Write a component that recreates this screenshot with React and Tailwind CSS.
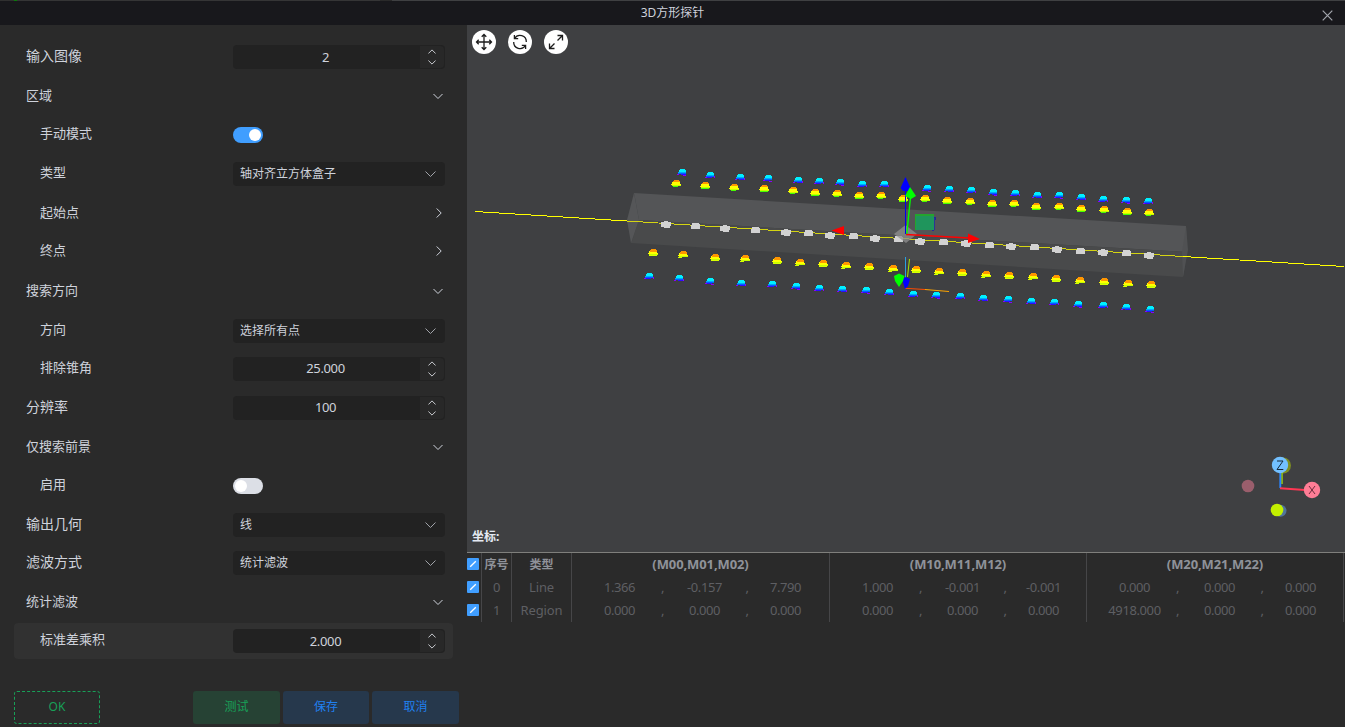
import React from 'react';

const CYAN_TOP = [
  [682, 172], [710, 175], [740, 177], [768, 178], [798, 180], [819, 181], [840, 182], [862, 184], [884, 184],
  [927, 188], [949, 189], [971, 190], [993, 192], [1015, 193], [1037, 195], [1059, 195], [1081, 197], [1103, 199],
  [1126, 200], [1148, 201],
];
const YELLOW_TOP = [
  [676, 183], [705, 185], [734, 187], [764, 188], [793, 190], [815, 192], [837, 193], [859, 195], [881, 195],
  [903, 198], [925, 198], [947, 200], [970, 201], [992, 203], [1014, 203], [1036, 206], [1059, 206], [1081, 208],
  [1104, 209], [1127, 211], [1149, 212],
];
const WHITE = [
  [666, 224], [695, 226], [725, 228], [755, 230], [786, 232], [808, 233], [830, 235], [853, 236], [875, 238],
  [898, 239], [920, 241], [943, 242], [966, 243], [989, 245], [1011, 246], [1034, 247], [1057, 249], [1080, 251],
  [1103, 252], [1126, 253], [1149, 255],
];
const ORANGE_BOTTOM = [
  [653, 252], [683, 254], [715, 257], [745, 258], [777, 260], [800, 262], [823, 263], [846, 265], [869, 266],
  [893, 268], [916, 269], [939, 271], [962, 272], [986, 274], [1009, 275], [1033, 276], [1056, 278], [1080, 280],
  [1104, 281], [1128, 283], [1151, 284],
];
const CYAN_BOTTOM = [
  [649, 276], [679, 278], [710, 281], [741, 283], [772, 284], [796, 286], [819, 288], [842, 289], [866, 290],
  [889, 292], [913, 294], [936, 295], [960, 296], [983, 298], [1008, 299], [1031, 301], [1054, 302], [1078, 304],
  [1103, 305], [1126, 307], [1150, 309],
];

function Cyan({ x, y, i }) {
  return (
    <g transform={`translate(${x} ${y})`}>
      <path fill="#00f0ff" d="M-2-3h5v1h1v2h-7v-2h1z" />
      <path fill="#00a8ff" d="M-4 0h8v1h-8z" />
      <path fill="#0060ff" d="M-4 1h8v1h-8z" />
      <path fill="#2a10ff" d={i % 2 ? 'M-3 2h5v1h-5z' : 'M-1 2h5v1h-5z'} />
      <path fill="#8a00ff" d={i % 3 === 0 ? 'M1 3h3v1h-3zM-5 2h2v1h-2z' : 'M-5 2h2v1h-2zM4 1h1v2h-1z'} />
    </g>
  );
}

function Warm({ x, y, i, hot }) {
  return (
    <g transform={`translate(${x} ${y})`}>
      <path fill="#ffff00" d="M-3-2h6v1h1v2h1v1h-10v-1h1v-2h1z" />
      <path fill="#c4ff00" d="M-4 2h9v1h-9z" />
      {!hot && <path fill="#46ff00" d={i % 2 ? 'M-4 3h8v1h-8z' : 'M-3 3h5v1h-5z'} />}
      {hot && <path fill="#d8ff00" d={i % 2 ? 'M-5 3h4v1h-4z' : 'M-4 3h8v1h-8z'} />}
      <path fill="#ff9600" d={hot ? 'M-2-3h5v1h1v2h-7v-2h1z' : 'M-2-3h5v1h1v1h-7v-1h1z'} />
    </g>
  );
}

function Scene() {
  return (
    <svg className="block h-[527px] w-[878px]" viewBox="467 25 878 527">
      <polygon points="634,193 1186,226 1187,252 639,220" fill="#545557" />
      <polygon points="639,220 1187,252 1183,277 631,243" fill="#494a4b" />
      <polygon points="634,193 627,220 631,243 639,220" fill="#555658" />
      <polygon points="1186,226 1188,250 1183,277 1182,252" fill="#505153" />
      <g shapeRendering="crispEdges" fill="none">
        <polyline points="475,211.5 627,221" stroke="#ffff00" />
        <polyline points="627,221 1183,256.5" stroke="#d4d412" />
        <polyline points="1183,256.5 1344,266.5" stroke="#ffff00" />
      </g>
      <g shapeRendering="crispEdges">
        {CYAN_TOP.map(([x, y], i) => <Cyan key={i} x={x} y={y} i={i} />)}
        {YELLOW_TOP.map(([x, y], i) => <Warm key={i} x={x} y={y} i={i} />)}
        {WHITE.map(([x, y], i) => (
          <path
            key={i}
            transform={`translate(${x} ${y})`}
            fill="#d2d2d2"
            d={i % 2 ? 'M-3-3h7v1h1v5h-9v-4h1z' : 'M-2-3h4v1h3v4h-1v2h-6v-1h-3v-5h3z'}
          />
        ))}
        {ORANGE_BOTTOM.map(([x, y], i) => <Warm key={i} x={x} y={y} i={i} hot />)}
        {CYAN_BOTTOM.map(([x, y], i) => <Cyan key={i} x={x} y={y} i={i + 1} />)}
      </g>

      {/* transform gizmo */}
      <polygon points="905.5,225 917,234 906,243 894,234" fill="#909090" opacity="0.75" />
      <g shapeRendering="crispEdges">
        <path d="M934 217h2v3h-1v9h-1v2h-2v-1h2z" fill="#23289a" />
        <rect x="915" y="214" width="19" height="16" fill="#23a52e" />
        <rect x="916" y="216" width="18" height="14" fill="#1f955c" />
        <path d="M934 218h1v12h-1z" fill="#2b3596" />
        <path d="M905 190h1v44h-1z" fill="#0000f0" />
      </g>
      <polygon points="905.5,177 911,189 908,191 903,191 900.5,188" fill="#0000ff" />
      <path d="M906.800 234L910.500 197" stroke="#00ff00" strokeWidth="1.400" />
      <polygon points="910,187 916,196 911,199 905,196" fill="#00ff00" />
      <path d="M906 234.500L969 238" stroke="#ff0000" strokeWidth="1.600" />
      <polygon points="968,233.500 980,239 968,243" fill="#ff0000" />
      <polygon points="831.500,230.500 844,226 844,235" fill="#ff0000" />
      <path d="M905.500 257V288" stroke="#2b9fe0" />
      <path d="M909.500 259L907.500 277" stroke="#a6e600" />
      <path d="M905 288.300L925 289.500" stroke="#ff4a00" />
      <path d="M925 289.500L949 291.500" stroke="#ffa500" />
      <polygon points="902,279 906,277 910,279 908,286 905,289" fill="#0000ff" />
      <polygon points="894,276 899,273.500 904.500,276 903,281 899,287 895,281" fill="#00ff00" />

      {/* orientation gizmo */}
      <circle cx="1283" cy="465.500" r="8" fill="#7d8c22" />
      <circle cx="1280.500" cy="510.700" r="6" fill="#50749a" />
      <path d="M1282 484V472" stroke="#a6dc00" strokeWidth="1.400" />
      <path d="M1280.300 488V472" stroke="#2b86ff" strokeWidth="1.900" />
      <path d="M1280 488.300L1305 490" stroke="#ff3653" strokeWidth="2" />
      <circle cx="1248" cy="486" r="6.300" fill="#9a5e6c" />
      <circle cx="1277" cy="510" r="6.300" fill="#c3f000" />
      <circle cx="1280" cy="465" r="8.200" fill="#72c0ff" />
      <circle cx="1312" cy="490" r="8.200" fill="#ff7d96" />
      <path d="M1277 461h6l-6 8.500h6.300" stroke="#15293a" fill="none" />
      <path d="M1309 486l6 8M1315 486l-6 8" stroke="#6d2c3b" fill="none" />
    </svg>
  );
}

function Chevron({ className = '', d = 'M.5 .5L5.500 5.500L10.500 .5', box = '0 0 11 7' }) {
  return (
    <svg className={className} viewBox={box} fill="none" stroke="currentColor">
      <path d={d} />
    </svg>
  );
}

function NumberInput({ value, low }) {
  return (
    <div className="flex h-6 w-[212px] overflow-hidden rounded bg-[#222222]">
      <div className={`flex-1 pl-[2px] pr-1 text-center text-[13px] leading-6 tracking-[-0.36px] text-[#cfd3dc] ${low ? '' : '-mt-px'}`}>{value}</div>
      <div className="my-px mr-px flex w-6 flex-col items-center justify-center gap-[6px] rounded-r bg-[#282828] pr-px text-[#c8cacf]">
        <Chevron className="h-[5px] w-[8px]" box="0 0 8 5" d="M.4 4.500L4 .9L7.600 4.500" />
        <Chevron className="h-[5px] w-[8px]" box="0 0 8 5" d="M.4 .5L4 4.100L7.600 .5" />
      </div>
    </div>
  );
}

function Select({ value }) {
  return (
    <div className="flex h-6 w-[212px] items-center justify-between rounded bg-[#222222] pl-[7px] pr-[9px] text-xs text-[#cfd3dc]">
      <span className="leading-6">{value}</span>
      <Chevron className="h-[7px] w-[11px] text-[#a0a3a9]" />
    </div>
  );
}

function Toggle({ on }) {
  return (
    <div className={on ? 'flex h-4 w-[30px] items-center justify-end rounded-full bg-[#409eff] px-[2px]' : 'flex h-4 w-[30px] items-center rounded-full bg-[#dcdfe6] px-[2px]'}>
      <div className="h-3 w-3 rounded-full bg-white" />
    </div>
  );
}

const ROWS = [
  { label: '输入图像', type: 'number', value: '2', gap: 'mt-0', low: true },
  { label: '区域', type: 'open', gap: 'mt-[3px]' },
  { label: '手动模式', nested: true, type: 'on', gap: 'mt-[3px]' },
  { label: '类型', nested: true, type: 'select', value: '轴对齐立方体盒子', gap: 'mt-[3px]' },
  { label: '起始点', nested: true, type: 'closed', gap: 'mt-[3px]' },
  { label: '终点', nested: true, type: 'closed', gap: 'mt-[2px]' },
  { label: '搜索方向', type: 'open', gap: 'mt-[4px]' },
  { label: '方向', nested: true, type: 'select', value: '选择所有点', gap: 'mt-[4px]' },
  { label: '排除锥角', nested: true, type: 'number', value: '25.000', gap: 'mt-[2px]' },
  { label: '分辨率', type: 'number', value: '100', gap: 'mt-[3px]' },
  { label: '仅搜索前景', type: 'open', gap: 'mt-[3px]' },
  { label: '启用', nested: true, type: 'off', gap: 'mt-[3px]' },
  { label: '输出几何', type: 'select', value: '线', gap: 'mt-[3px]' },
  { label: '滤波方式', type: 'select', value: '统计滤波', gap: 'mt-[2px]' },
  { label: '统计滤波', type: 'open', gap: 'mt-[3px]' },
  { label: '标准差乘积', nested: true, type: 'number', value: '2.000', gap: 'mt-[3px]', active: true, low: true },
];

function Row({ row }) {
  const collapsible = row.type === 'open' || row.type === 'closed';
  return (
    <div className={`flex h-9 items-center rounded ${row.gap} ${row.active ? 'bg-[#313131]' : ''}`}>
      <div
        className={`w-[219px] text-[#cfd3dc] ${row.nested ? 'pl-[26px]' : 'pl-3'} ${row.nested || collapsible ? 'text-[13px]' : 'text-sm'} ${collapsible ? '' : 'pb-[3px]'}`}
      >
        {row.label}
      </div>
      {row.type === 'number' && <NumberInput value={row.value} low={row.low} />}
      {row.type === 'select' && <Select value={row.value} />}
      {row.type === 'on' && <Toggle on />}
      {row.type === 'off' && <Toggle />}
      {row.type === 'open' && <Chevron className="ml-auto mr-[10px] h-[7px] w-[10px] text-[#cfd3dc]" box="0 0 10 7" d="M.5 1L5 5.500L9.500 1" />}
      {row.type === 'closed' && <Chevron className="ml-auto mr-[11px] h-[10px] w-[6px] text-[#cfd3dc]" box="0 0 6 10" d="M.7 .5L5.200 5L.7 9.500" />}
    </div>
  );
}

function RoundButton({ children }) {
  return (
    <button className="flex h-6 w-6 items-center justify-center rounded-full bg-white">
      <svg className="h-[18px] w-[18px]" viewBox="0 0 18 18" fill="none" stroke="#1c1c1c" strokeWidth="1.300">
        {children}
      </svg>
    </button>
  );
}

function Check() {
  return (
    <div className="mb-[2px] flex h-3 w-3 items-center justify-center rounded-[1px] bg-[#409eff]">
      <svg className="h-3 w-3" viewBox="0 0 12 12" fill="none" stroke="#fff" strokeWidth="1.300">
        <path d="M3.200 8.700L8.800 3.200" />
      </svg>
    </div>
  );
}

const TABLE = [
  ['0', 'Line', [['1.366', '-0.157', '7.790'], ['1.000', '-0.001', '-0.001'], ['0.000', '0.000', '0.000']]],
  ['1', 'Region', [['0.000', '0.000', '0.000'], ['0.000', '0.000', '0.000'], ['4918.000', '0.000', '0.000']]],
];
const COLS = 'grid h-[23px] grid-cols-[15px_30px_60px_258px_257px_257px] text-center leading-[23px]';
const CELL = 'border-r border-[#464648]';

function Triple({ values }) {
  return (
    <div className={`grid grid-cols-[78px_8px_76px_9px_68px] pl-[8.5px] ${CELL}`}>
      <span>{values[0]}</span>
      <span>,</span>
      <span>{values[1]}</span>
      <span>,</span>
      <span>{values[2]}</span>
    </div>
  );
}

export default function App() {
  return (
    <div className="flex h-[727px] w-[1345px] flex-col overflow-hidden bg-[#2a2a2a] font-['Noto_Sans','Noto_Sans_CJK_SC',sans-serif]">
      <div className="flex h-px bg-[#3f4042]">
        <div className="w-[14px] bg-[#303030]" />
        <div className="w-[3px] bg-[#0b7a0b]" />
        <div className="w-[363px] bg-[#353536]" />
        <div className="w-3 bg-[#2a2a2a]" />
      </div>
      <header className="flex h-6 items-center bg-[#18181c] pl-[23px] pr-3">
        <div className="flex-1 text-center text-xs text-[#cfd3dc]">3D方形探针</div>
        <svg className="mt-1 h-[11px] w-[11px]" viewBox="0 0 11 11" stroke="#a3a6ad" strokeWidth="1.200">
          <path d="M.7 .7L10.300 10.300M10.300 .7L.7 10.300" />
        </svg>
      </header>

      <div className="flex min-h-0 flex-1">
        <aside className="flex w-[467px] flex-col pl-[14px] pt-[14px]">
          <div className="w-[439px]">
            {ROWS.map((row) => <Row key={row.label + row.type} row={row} />)}
          </div>
          <div className="mt-8 flex h-[33px] text-xs">
            <button className="w-[86px] rounded-[3px] border border-dashed border-[#18a058] pb-[2px] text-[#18a058]">OK</button>
            <button className="ml-[93px] w-[87px] rounded-[3px] bg-[#264234] pb-[2px] text-[#18a058]">测试</button>
            <button className="ml-[3px] w-[86px] rounded-[3px] bg-[#26384c] pb-[2px] text-[#2080f0]">保存</button>
            <button className="ml-[3px] w-[87px] rounded-[3px] bg-[#26384c] pb-[2px] text-[#2080f0]">取消</button>
          </div>
        </aside>

        <main className="flex w-[878px] flex-col">
          <section className="relative h-[527px] bg-[#3f4042]">
            <Scene />
            <div className="absolute left-[5px] top-[5px] flex gap-3">
              <RoundButton>
                <path d="M9 1.500v15M1.500 9h15M6.700 3.700L9 1.500l2.300 2.200M6.700 14.300L9 16.500l2.300-2.200M3.700 6.700L1.500 9l2.200 2.300M14.300 6.700L16.500 9l-2.200 2.300" />
              </RoundButton>
              <RoundButton>
                <path d="M3.400 2v3.700h3.800M3.600 5.500A6.300 6.300 0 0 1 15.300 9M14.600 16v-3.700h-3.800M14.400 12.500A6.300 6.300 0 0 1 2.700 9" />
              </RoundButton>
              <RoundButton>
                <path d="M10.500 7.500L15.500 2.500M10.500 2.500h5v5M7.500 10.500L2.500 15.500M2.500 10.500v5h5" />
              </RoundButton>
            </div>
            <div className="absolute bottom-[7px] left-[5px] text-xs font-bold text-[#e5eaf3]">坐标:</div>
          </section>

          <section className="border-t border-[#7f7f7c] text-[13px] tracking-[-0.4px] text-[#5e5f63]">
            <div className={`${COLS} text-xs font-bold text-[#8f9299]`}>
              <div className={`flex items-center ${CELL}`}><Check /></div>
              <div className={`tracking-normal ${CELL}`}>序号</div>
              <div className={`tracking-normal ${CELL}`}>类型</div>
              <div className={`text-[13px] leading-[23px] tracking-[-0.1px] ${CELL}`}>(M00,M01,M02)</div>
              <div className={`text-[13px] leading-[23px] tracking-[-0.1px] ${CELL}`}>(M10,M11,M12)</div>
              <div className={`text-[13px] leading-[23px] tracking-[-0.1px] ${CELL}`}>(M20,M21,M22)</div>
            </div>
            {TABLE.map(([id, kind, groups]) => (
              <div key={id} className={COLS}>
                <div className={`flex items-center ${CELL}`}><Check /></div>
                <div className={CELL}>{id}</div>
                <div className={`tracking-[-0.1px] ${CELL}`}>{kind}</div>
                {groups.map((g, i) => <Triple key={i} values={g} />)}
              </div>
            ))}
          </section>
        </main>
      </div>
    </div>
  );
}
